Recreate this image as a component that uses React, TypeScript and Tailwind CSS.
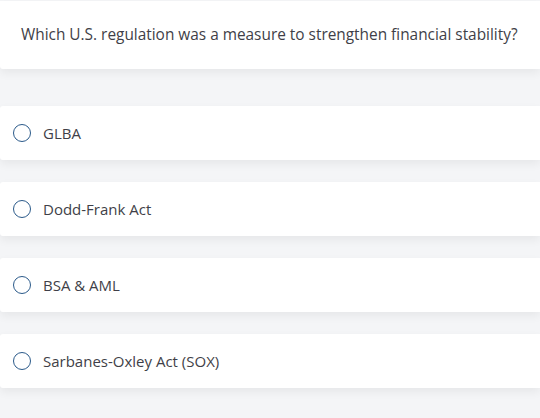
import React from 'react';

const options = ['GLBA', 'Dodd-Frank Act', 'BSA & AML', 'Sarbanes-Oxley Act (SOX)'];

const OptionRow: React.FC<{ label: string }> = ({ label }) => {
  return (
    <label className="flex h-[54px] items-center bg-white pl-[13px] shadow-[0_4px_10px_rgba(0,0,0,0.06)] rounded-l-[3px]">
      <span className="h-[18px] w-[18px] shrink-0 rounded-full border-[1.5px] border-[#2b5a8a]" />
      <span className="ml-[12px] text-[15px] text-[#3f3f48]">{label}</span>
    </label>
  );
};

export default function App() {
  return (
    <div
      className="min-h-[418px] w-[540px] bg-[#f4f5f7] pt-px"
      style={{ fontFamily: '"Open Sans", "Noto Sans", sans-serif' }}
    >
      <div className="flex h-[68px] items-center bg-white pl-[21px] shadow-[0_4px_10px_rgba(0,0,0,0.06)] rounded-bl-[3px]">
        <p className="text-[15.4px] text-[#3f3f48]">
          Which U.S. regulation was a measure to strengthen financial stability?
        </p>
      </div>
      <div className="mt-[37px] flex flex-col gap-[22px]">
        {options.map((o) => (
          <OptionRow key={o} label={o} />
        ))}
      </div>
    </div>
  );
}
